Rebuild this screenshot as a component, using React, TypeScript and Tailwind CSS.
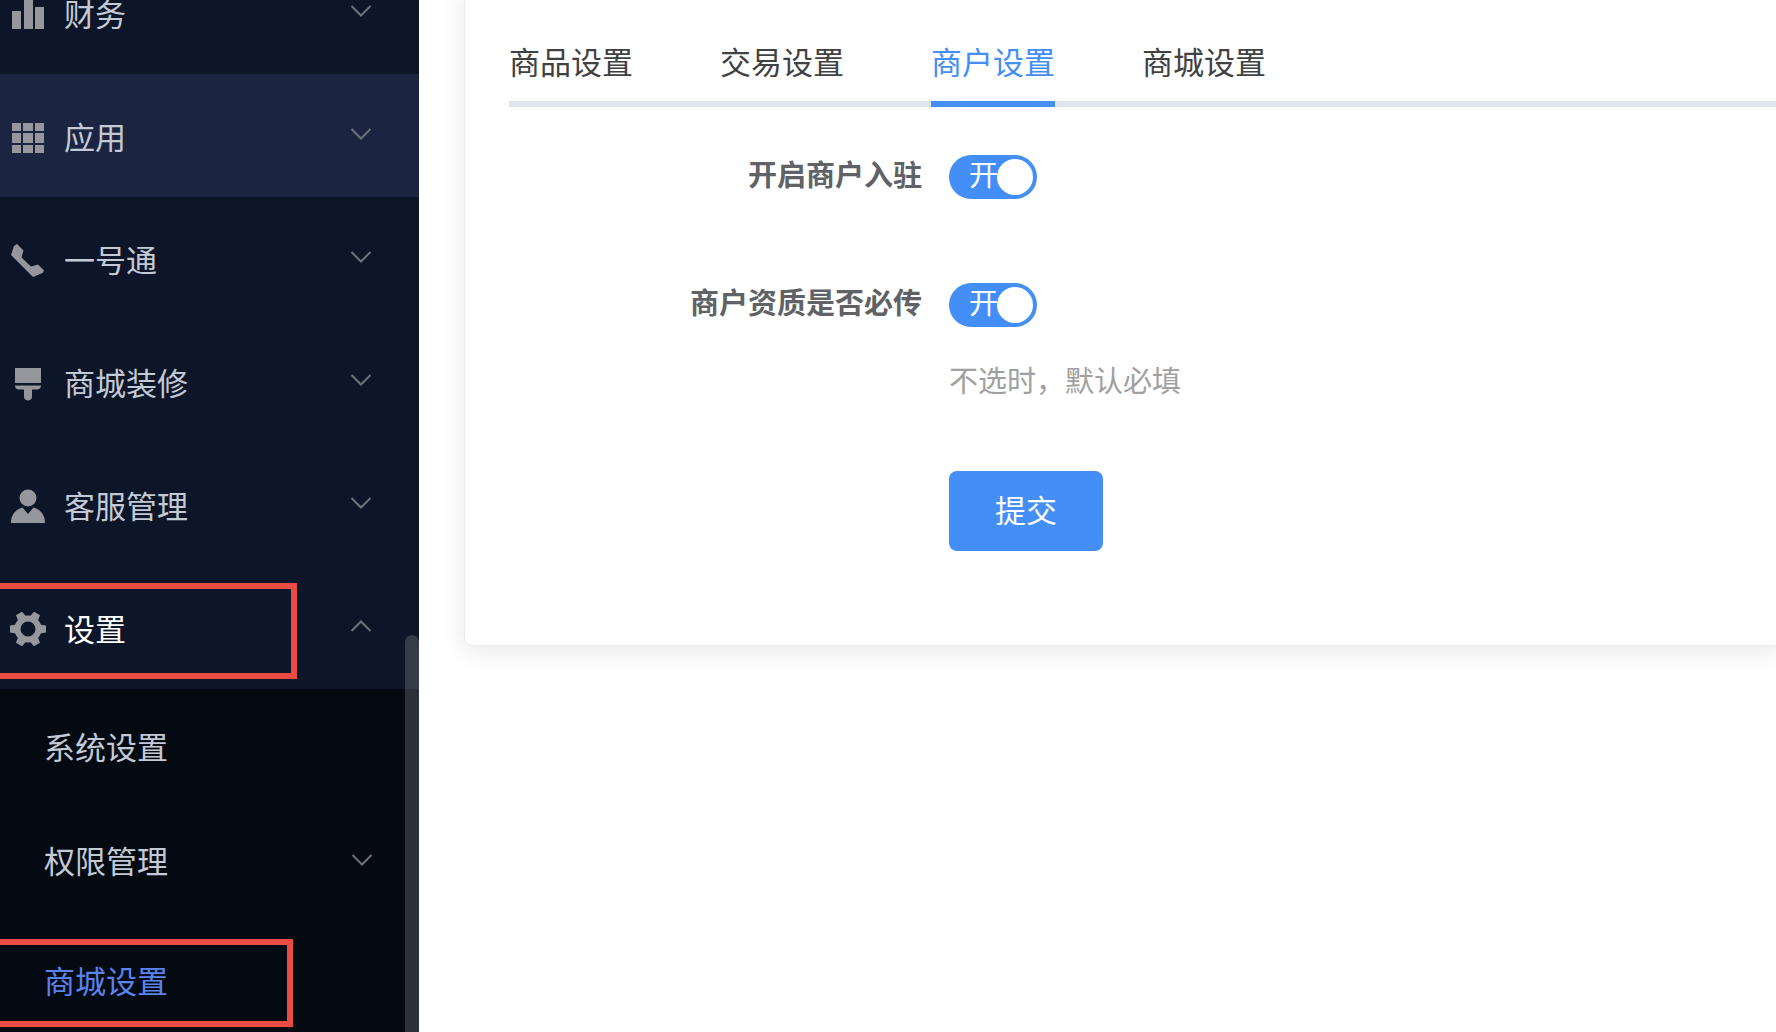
import { useState } from "react";
import type { ReactNode } from "react";

interface MenuItem {
  label: string;
  icon: ReactNode;
  open?: boolean;
  hovered?: boolean;
}

const FinanceIcon = () => (
  <svg viewBox="0 0 36 36" className="size-9 shrink-0" fill="currentColor" aria-hidden="true">
    <path d="M2 14h9v18H2zM14 2h9v30h-9zM25 10h9v22h-9z" />
  </svg>
);

const AppsIcon = () => (
  <svg viewBox="0 0 36 36" className="size-9 shrink-0" fill="currentColor" aria-hidden="true">
    <path d="M2 3h9v8H2zM13 3h10v8H13zM25 3h9v8h-9zM2 13h9v10H2zM13 13h10v10H13zM25 13h9v10h-9zM2 25h9v8H2zM13 25h10v8H13zM25 25h9v8h-9z" />
  </svg>
);

const PhoneIcon = () => (
  <svg viewBox="0 0 36 36" className="size-9 shrink-0" fill="currentColor" aria-hidden="true">
    <path d="M7 1 13.500 7.500 11.500 14.500 21 23.500 28 21.500 34 27.500 32.500 30 23 34 1 12 4 3z" />
  </svg>
);

const BrushIcon = () => (
  <svg viewBox="0 0 36 36" className="size-9 shrink-0" fill="currentColor" aria-hidden="true">
    <path d="M5 2h26v15H5zM5 19.500h26c0 2.500-1.500 4-4 4h-5V31c0 4.500-8 4.500-8 0v-7.500H9c-2.500 0-4-1.500-4-4z" />
  </svg>
);

const UserIcon = () => (
  <svg viewBox="0 0 36 36" className="size-9 shrink-0" fill="currentColor" aria-hidden="true">
    <circle cx="18" cy="9" r="8.500" />
    <path d="M1 34c0-8 4.500-13.500 11.500-15.500L18 25l5.500-6.500C30.500 20.500 35 26 35 34z" />
  </svg>
);

const GearIcon = () => (
  <svg viewBox="0 0 36 36" className="size-9 shrink-0" aria-hidden="true">
    <circle cx="18" cy="17" r="10.500" fill="none" stroke="currentColor" strokeWidth="6" />
    <g fill="currentColor">
      {[30, 90, 150, 210, 270, 330].map((deg) => (
        <path key={deg} d="M13.500 5 14.500-1h7L22.500 5z" transform={`rotate(${deg} 18 17)`} />
      ))}
    </g>
  </svg>
);

const Chevron = ({ up = false }: { up?: boolean }) => (
  <svg
    viewBox="0 0 22 14"
    className={`h-[14px] w-[22px] shrink-0 text-[#6d7179] ${up ? "rotate-180" : ""}`}
    fill="none"
    stroke="currentColor"
    strokeWidth="2"
    aria-hidden="true"
  >
    <path d="M1.500 2 11 11.500 20.500 2" />
  </svg>
);

const menuItems: MenuItem[] = [
  { label: "财务", icon: <FinanceIcon /> },
  { label: "应用", icon: <AppsIcon />, hovered: true },
  { label: "一号通", icon: <PhoneIcon /> },
  { label: "商城装修", icon: <BrushIcon /> },
  { label: "客服管理", icon: <UserIcon /> },
  { label: "设置", icon: <GearIcon />, open: true },
];

const tabs = ["商品设置", "交易设置", "商户设置", "商城设置"];

// red frame around the menu entries to click
const Marker = ({ className }: { className: string }) => (
  <span className={`pointer-events-none absolute left-0 border-6 border-l-0 border-[#ea4b43] ${className}`} />
);

const Sidebar = () => (
  <aside className="relative h-screen w-[419px] shrink-0 overflow-hidden bg-[#0d1628] text-[31px] leading-7 text-[#c3cad6]">
    {/* the list is scrolled, so its first row is partly out of view */}
    <nav className="-mt-[49px]">
      {menuItems.map((item) => (
        <button
          key={item.label}
          type="button"
          aria-expanded={!!item.open}
          className={`relative flex h-[123px] w-full items-center pt-1 pr-[47px] pl-[10px] text-left ${
            item.hovered ? "bg-[#1b2541]" : ""
          }`}
        >
          <span className="text-[#95979c]">{item.icon}</span>
          <span className={`ml-[18px] flex-1 pb-1 ${item.open ? "text-white" : ""}`}>{item.label}</span>
          <span className="pb-2">
            <Chevron up={item.open} />
          </span>
          {item.open && <Marker className="top-[17px] h-24 w-[297px]" />}
        </button>
      ))}
      <div className="bg-[#040a12]">
        <a href="#system" className="flex h-[114px] items-center pl-11">
          系统设置
        </a>
        <button type="button" className="flex h-[114px] w-full items-center pr-[46px] pl-11 text-left">
          <span className="flex-1">权限管理</span>
          <Chevron />
        </button>
        <a href="#mall" className="relative flex h-[126px] items-center pl-11 text-[#5b83ee]">
          商城设置
          <Marker className="top-[22px] h-[88px] w-[293px]" />
        </a>
      </div>
    </nav>
    <span className="absolute top-[635px] right-0 -bottom-2 w-[14px] rounded-full bg-[#909399]/30" />
  </aside>
);

const Switch = ({ id }: { id: string }) => {
  const [on, setOn] = useState(true);
  return (
    <span className="relative inline-flex h-11 w-22">
      <input
        id={id}
        type="checkbox"
        role="switch"
        checked={on}
        onChange={(e) => setOn(e.target.checked)}
        className="h-11 w-22 cursor-pointer appearance-none rounded-full bg-[#c0c4cc] checked:bg-[#448ef7]"
      />
      {on && (
        <span className="pointer-events-none absolute top-0 left-5 text-[29px] leading-9 text-white">开</span>
      )}
      <span
        className={`pointer-events-none absolute top-1 size-9 rounded-full bg-white ${on ? "right-1" : "left-1"}`}
      />
    </span>
  );
};

const App = () => {
  const [active, setActive] = useState("商户设置");

  return (
    <div className="flex min-h-screen overflow-hidden bg-white font-['Noto_Sans_CJK_SC','Liberation_Sans',sans-serif]">
      <Sidebar />
      <main className="min-w-0 flex-1 pl-[45px]">
        <section className="-mt-2 -mr-2 rounded-lg border border-[#e7ebf3] bg-white pt-2 pb-[94px] pl-11 shadow-[0_4px_26px_rgba(0,0,0,0.1)]">
          <div role="tablist" className="flex gap-[87px] border-b-6 border-[#e0e4ed] pt-10">
            {tabs.map((tab) => (
              <button
                key={tab}
                type="button"
                role="tab"
                aria-selected={tab === active}
                onClick={() => setActive(tab)}
                className={`-mb-[6px] border-b-6 pb-5 text-[31px] leading-10 ${
                  tab === active ? "border-[#448ef7] text-[#448ef7]" : "border-transparent text-[#404143]"
                }`}
              >
                {tab}
              </button>
            ))}
          </div>

          <form className="pt-12 text-[29px] leading-9" onSubmit={(e) => e.preventDefault()}>
            <div className="flex h-11">
              <label htmlFor="merchant-join" className="mr-[27px] w-[413px] text-right font-bold text-[#606266]">
                开启商户入驻
              </label>
              <Switch id="merchant-join" />
            </div>
            <div className="mt-21 flex h-11">
              <label htmlFor="merchant-cert" className="mr-[27px] w-[413px] text-right font-bold text-[#606266]">
                商户资质是否必传
              </label>
              <Switch id="merchant-cert" />
            </div>
            <p className="mt-[34px] ml-[440px] text-[#a0a0a0]">不选时，默认必填</p>
            <button
              type="submit"
              className="mt-[74px] ml-[440px] block h-20 rounded-lg bg-[#448ef7] px-[46px] pb-1 text-[31px] text-white"
            >
              提交
            </button>
          </form>
        </section>
      </main>
    </div>
  );
};

export default App;
